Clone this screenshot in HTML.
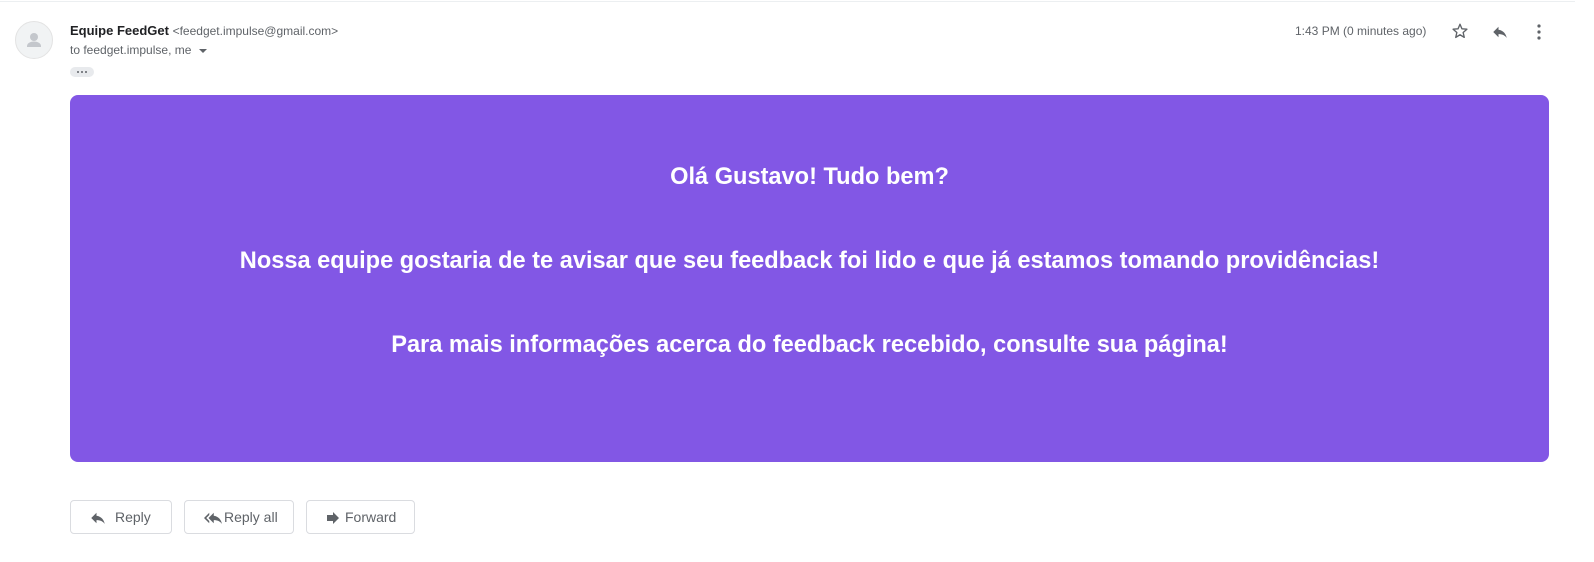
<!DOCTYPE html>
<html><head><meta charset="utf-8"><style>
body{margin:0;width:1594px;height:562px;background:#fff;font-family:"Liberation Sans",Arial,sans-serif;position:relative;overflow:hidden}
.topline{position:absolute;left:0;top:1px;width:1575px;height:1px;background:#eceff1}
.av{position:absolute;left:15px;top:21px;width:38px;height:38px;border-radius:50%;background:#f1f3f4;border:1px solid #e3e3e3;box-sizing:border-box}
.name{position:absolute;left:70px;top:23px;font-size:13px;color:#202124;font-weight:bold}
.name span{font-weight:normal;font-size:12px;color:#5f6368}
.to{position:absolute;left:70px;top:43px;font-size:12px;color:#5f6368}
.dots{position:absolute;left:70px;top:67px;width:24px;height:10px;border-radius:5px;background:#e8eaed}
.dots i{position:absolute;top:4px;width:2px;height:2px;border-radius:1px;background:#5f6368}
.time{position:absolute;left:1295px;top:24px;font-size:12px;color:#5f6368}
.box{position:absolute;left:70px;top:95px;width:1479px;height:367px;background:#8257e5;border-radius:8px;color:#fff;text-align:center;font-weight:bold;font-size:23.6px}
.box p{position:absolute;left:0;right:0;margin:0}
.btn{position:absolute;top:500px;height:34px;border:1px solid #dadce0;border-radius:4px;box-sizing:border-box;font-size:14px;color:#5f6368;line-height:32px}
.btn svg{position:absolute;left:17px;top:8px}
.btn span{position:absolute;left:44px;top:0}
</style></head><body>
<div class="topline"></div>
<div class="av"><svg width="36" height="36" viewBox="0 0 36 36"><circle cx="18" cy="15" r="4" fill="#c4c7cc"/><path d="M11 24c0-3 4-4.5 7-4.5s7 1.5 7 4.5v1H11z" fill="#c4c7cc"/></svg></div>
<div class="name">Equipe FeedGet <span>&lt;feedget.impulse@gmail.com&gt;</span></div>
<div class="to">to feedget.impulse, me <svg width="10" height="6" viewBox="0 0 10 6" style="margin-left:3px"><path d="M1 1h8L5 5z" fill="#5f6368"/></svg></div>
<div class="dots"><i style="left:7px"></i><i style="left:11px"></i><i style="left:15px"></i></div>
<div class="time">1:43 PM (0 minutes ago)</div>
<svg style="position:absolute;left:1451px;top:22px" width="18" height="18" viewBox="0 0 24 24"><path d="M12 3l2.6 6.1 6.6.5-5 4.4 1.5 6.5L12 17l-5.7 3.5 1.5-6.5-5-4.4 6.6-.5z" fill="none" stroke="#5f6368" stroke-width="1.8" stroke-linejoin="round"/></svg>
<svg style="position:absolute;left:1490px;top:23px" width="20" height="18" viewBox="0 0 24 24"><path d="M10 9V5l-7 7 7 7v-4.1c5 0 8.5 1.6 11 5.1-1-5-4-10-11-11z" fill="#5f6368"/></svg>
<svg style="position:absolute;left:1534px;top:23px" width="10" height="18" viewBox="0 0 10 18"><circle cx="5" cy="3" r="1.6" fill="#5f6368"/><circle cx="5" cy="9" r="1.6" fill="#5f6368"/><circle cx="5" cy="15" r="1.6" fill="#5f6368"/></svg>
<div class="box">
<p style="top:69px">Olá Gustavo! Tudo bem?</p>
<p style="top:153px">Nossa equipe gostaria de te avisar que seu feedback foi lido e que já estamos tomando providências!</p>
<p style="top:237px">Para mais informações acerca do feedback recebido, consulte sua página!</p>
</div>
<div class="btn" style="left:70px;width:102px"><svg width="20" height="18" viewBox="0 0 24 24"><path d="M10 9V5l-7 7 7 7v-4.1c5 0 8.5 1.6 11 5.1-1-5-4-10-11-11z" fill="#5f6368"/></svg><span>Reply</span></div>
<div class="btn" style="left:184px;width:110px"><svg width="22" height="18" viewBox="0 0 24 24"><path d="M7 8V5l-7 7 7 7v-3l-4-4z M13 9V5l-7 7 7 7v-4.1c5 0 8.5 1.6 11 5.1-1-5-4-10-11-11z" fill="#5f6368"/></svg><span style="left:39px">Reply all</span></div>
<div class="btn" style="left:306px;width:109px"><svg width="18" height="18" viewBox="0 0 24 24"><path d="M12 8V4l8 8-8 8v-4H4V8z" fill="#5f6368"/></svg><span style="left:38px">Forward</span></div>
</body></html>
